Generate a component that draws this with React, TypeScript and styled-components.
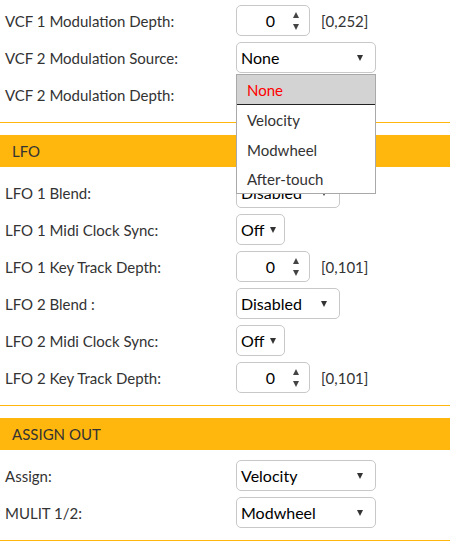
import * as React from "react";
import styled, { createGlobalStyle } from "styled-components";

const orange = "#ffb60d";

const GlobalStyle = createGlobalStyle`
  html, body {
    margin: 0;
    padding: 0;
    background: #fff;
  }
  body {
    font-family: Lato, "Open Sans", Arial, sans-serif;
    font-size: 15px;
    color: #333;
  }
`;

const Page = styled.div`
  position: relative;
  width: 450px;
  padding-top: 5px;
`;

const Section = styled.section`
  border-bottom: 1px solid ${orange};
`;

const SectionHeader = styled.div`
  margin-top: 12px;
  height: 32px;
  display: flex;
  align-items: center;
  padding-left: 12px;
  background: ${orange};
  color: #333;
`;

const Rows = styled.div<{ $top?: number }>`
  display: grid;
  grid-template-columns: 231px 1fr;
  grid-auto-rows: 31px;
  row-gap: 6px;
  padding: ${(p) => p.$top ?? 10}px 0 12px 5px;
  align-items: center;
`;

const Label = styled.div`
  color: #333;
  white-space: nowrap;
`;

const Field = styled.div`
  position: relative;
  display: flex;
  align-items: center;
  gap: 11px;
  height: 31px;
`;

const Box = styled.div<{ $w: number }>`
  box-sizing: border-box;
  width: ${(p) => p.$w}px;
  height: 31px;
  border: 1px solid #c8c8c8;
  border-radius: 5px;
  background: #fff;
  display: flex;
  align-items: center;
  color: #000;
  font-size: 16px;
`;

const SelectText = styled.span`
  flex: 1;
  padding-left: 4px;
`;

const Caret = styled.span<{ $right: number }>`
  width: 0;
  height: 0;
  margin-right: ${(p) => p.$right}px;
  border-left: 3.5px solid transparent;
  border-right: 3.5px solid transparent;
  border-top: 6px solid #333;
`;

const NumValue = styled.span`
  flex: 1;
  text-align: right;
  padding-right: 18px;
`;

const Spin = styled.span`
  display: flex;
  flex-direction: column;
  gap: 6px;
  margin-right: 10px;
`;

const SpinUp = styled.span`
  width: 0;
  height: 0;
  border-left: 3.5px solid transparent;
  border-right: 3.5px solid transparent;
  border-bottom: 6px solid #444;
`;

const SpinDown = styled(SpinUp)`
  border-bottom: none;
  border-top: 6px solid #444;
`;

const Range = styled.span`
  color: #333;
`;

const Menu = styled.ul`
  position: absolute;
  left: 0;
  top: 32px;
  z-index: 2;
  box-sizing: border-box;
  width: 140px;
  margin: 0;
  padding: 0;
  list-style: none;
  background: #fff;
  border: 1px solid #a9a9a9;
`;

const MenuItem = styled.li<{ $active?: boolean }>`
  height: 30px;
  display: flex;
  align-items: center;
  padding-left: 10px;
  color: ${(p) => (p.$active ? "#ff0000" : "#333")};
  background: ${(p) => (p.$active ? "#d3d3d3" : "transparent")};
  border-bottom: ${(p) => (p.$active ? "1px solid #222" : "none")};
  box-sizing: border-box;
  &:last-child {
    height: 28px;
  }
`;

function Select({ value, width, caret = 12 }: { value: string; width: number; caret?: number }) {
  return (
    <Box $w={width}>
      <SelectText>{value}</SelectText>
      <Caret $right={caret} />
    </Box>
  );
}

function NumberInput({ value, range }: { value: number; range: string }) {
  return (
    <>
      <Box $w={74}>
        <NumValue>{value}</NumValue>
        <Spin>
          <SpinUp />
          <SpinDown />
        </Spin>
      </Box>
      <Range>{range}</Range>
    </>
  );
}

const sources = ["None", "Velocity", "Modwheel", "After-touch"];

export default function App() {
  return (
    <Page>
      <GlobalStyle />
      <Section>
        <Rows $top={0}>
          <Label>VCF 1 Modulation Depth:</Label>
          <Field>
            <NumberInput value={0} range="[0,252]" />
          </Field>

          <Label>VCF 2 Modulation Source:</Label>
          <Field>
            <Select value="None" width={140} />
            <Menu>
              {sources.map((s, i) => (
                <MenuItem key={s} $active={i === 0}>
                  {s}
                </MenuItem>
              ))}
            </Menu>
          </Field>

          <Label>VCF 2 Modulation Depth:</Label>
          <Field />
        </Rows>
      </Section>

      <Section>
        <SectionHeader>LFO</SectionHeader>
        <Rows>
          <Label>LFO 1 Blend:</Label>
          <Field>
            <Select value="Disabled" width={104} />
          </Field>

          <Label>LFO 1 Midi Clock Sync:</Label>
          <Field>
            <Select value="Off" width={49} caret={8} />
          </Field>

          <Label>LFO 1 Key Track Depth:</Label>
          <Field>
            <NumberInput value={0} range="[0,101]" />
          </Field>

          <Label>LFO 2 Blend :</Label>
          <Field>
            <Select value="Disabled" width={104} />
          </Field>

          <Label>LFO 2 Midi Clock Sync:</Label>
          <Field>
            <Select value="Off" width={49} caret={8} />
          </Field>

          <Label>LFO 2 Key Track Depth:</Label>
          <Field>
            <NumberInput value={0} range="[0,101]" />
          </Field>
        </Rows>
      </Section>

      <Section>
        <SectionHeader>ASSIGN OUT</SectionHeader>
        <Rows>
          <Label>Assign:</Label>
          <Field>
            <Select value="Velocity" width={140} />
          </Field>

          <Label>MULIT 1/2:</Label>
          <Field>
            <Select value="Modwheel" width={140} />
          </Field>
        </Rows>
      </Section>
    </Page>
  );
}
